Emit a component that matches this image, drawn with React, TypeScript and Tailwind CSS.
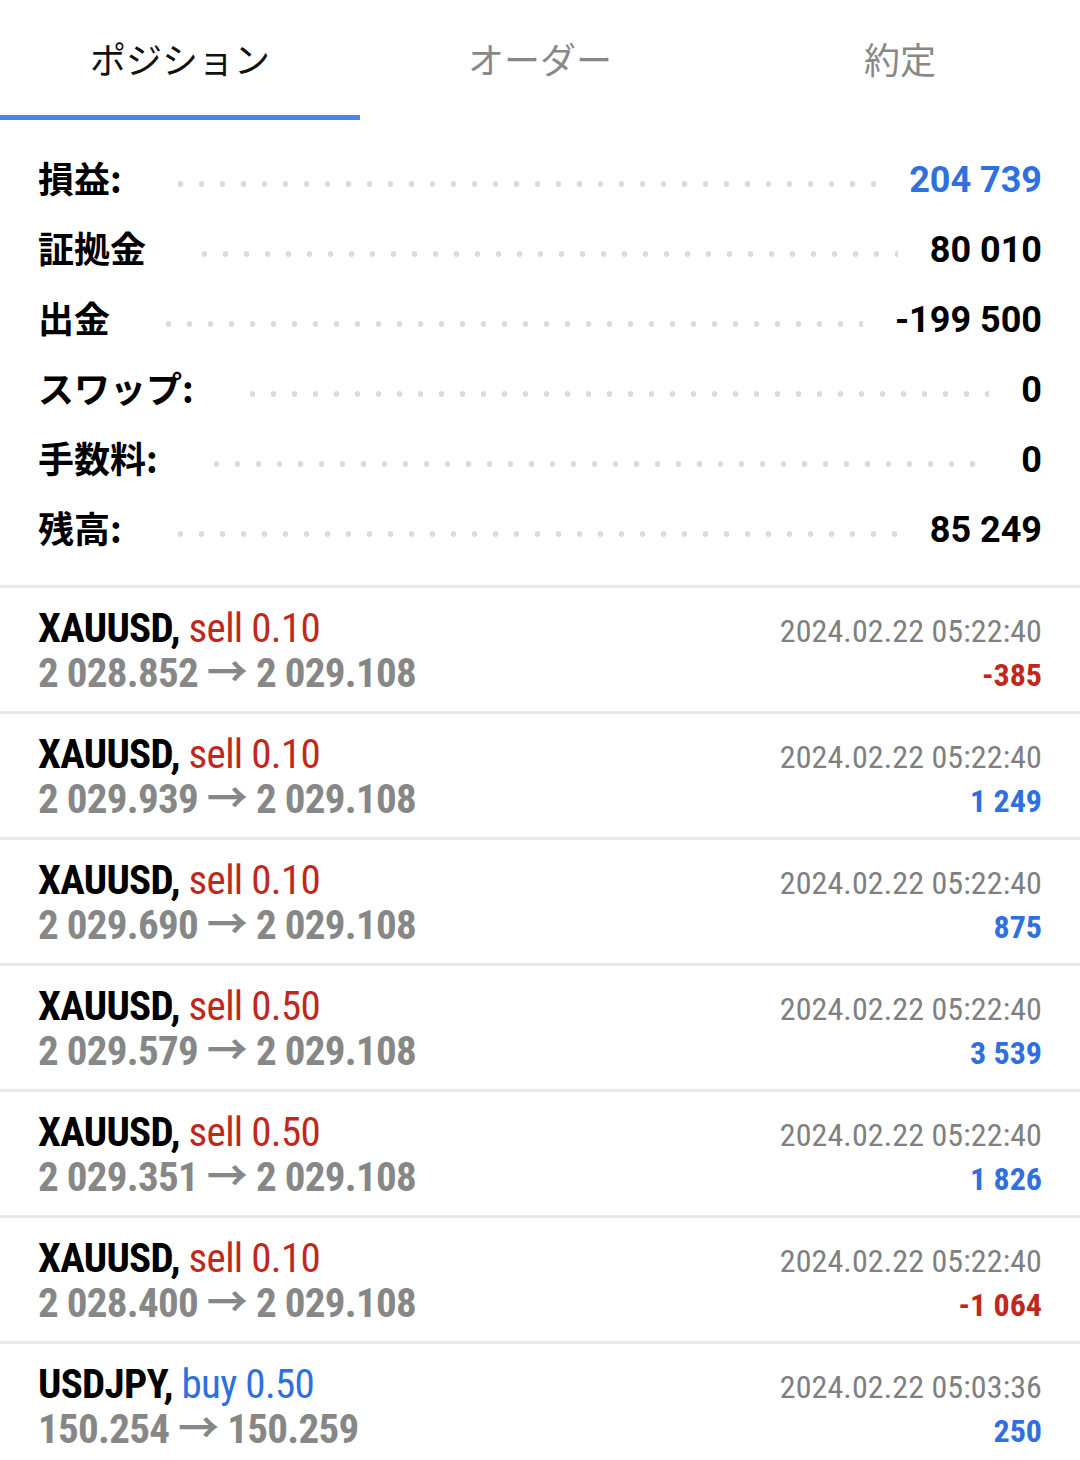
const tabs = ["ポジション", "オーダー", "約定"];

const summary = [
  { label: "損益:", value: "204 739", blue: true },
  { label: "証拠金", value: "80 010" },
  { label: "出金", value: "-199 500" },
  { label: "スワップ:", value: "0" },
  { label: "手数料:", value: "0" },
  { label: "残高:", value: "85 249" },
];

const positions = [
  { symbol: "XAUUSD", side: "sell", volume: "0.10", open: "2 028.852", close: "2 029.108", time: "2024.02.22 05:22:40", profit: "-385" },
  { symbol: "XAUUSD", side: "sell", volume: "0.10", open: "2 029.939", close: "2 029.108", time: "2024.02.22 05:22:40", profit: "1 249" },
  { symbol: "XAUUSD", side: "sell", volume: "0.10", open: "2 029.690", close: "2 029.108", time: "2024.02.22 05:22:40", profit: "875" },
  { symbol: "XAUUSD", side: "sell", volume: "0.50", open: "2 029.579", close: "2 029.108", time: "2024.02.22 05:22:40", profit: "3 539" },
  { symbol: "XAUUSD", side: "sell", volume: "0.50", open: "2 029.351", close: "2 029.108", time: "2024.02.22 05:22:40", profit: "1 826" },
  { symbol: "XAUUSD", side: "sell", volume: "0.10", open: "2 028.400", close: "2 029.108", time: "2024.02.22 05:22:40", profit: "-1 064" },
  { symbol: "USDJPY", side: "buy", volume: "0.50", open: "150.254", close: "150.259", time: "2024.02.22 05:03:36", profit: "250" },
];

export default function App() {
  return (
    <div className="w-[1080px] h-[1460px] overflow-hidden bg-white font-['Roboto','Noto_Sans_CJK_JP',sans-serif]">
      {/* Tabs */}
      <div className="flex h-[120px]">
        {tabs.map((tab, i) => (
          <div key={tab} className="flex-1 flex flex-col">
            <div
              className={
                "flex-1 flex items-center justify-center text-[36px] font-['Noto_Sans_CJK_JP',sans-serif] " +
                (i === 0 ? "text-[#111]" : "text-[#888]")
              }
            >
              {tab}
            </div>
            <div className={i === 0 ? "h-[5px] bg-[#4a86e8]" : "h-[5px]"} />
          </div>
        ))}
      </div>

      {/* Summary */}
      <div className="pt-[22px] pb-[23px] px-[38px]">
        {summary.map((row) => (
          <div key={row.label} className="flex items-center h-[70px]">
            <span className="text-[36px] font-bold text-black font-['Noto_Sans_CJK_JP',sans-serif] leading-none">
              {row.label}
            </span>
            <div className="flex-1 h-[6px] mt-[14px] ml-[48px] mr-[32px] bg-[radial-gradient(circle,#dcdcdc_2.6px,transparent_3.1px)] bg-[length:21px_6px] bg-repeat-x" />
            <span
              className={
                "text-[36px] font-bold leading-none mt-[5px] " +
                (row.blue ? "text-[#2f6fde]" : "text-black")
              }
            >
              {row.value}
            </span>
          </div>
        ))}
      </div>

      {/* Positions */}
      <div className="font-stretch-condensed">
        {positions.map((p, i) => (
          <div key={i} className="border-t-[3px] border-[#e9e9e9] h-[126px] px-[38px] pt-[18px] flex justify-between">
            <div className="flex flex-col">
              <div className="text-[41px] leading-[45px] tracking-[-0.7px]">
                <span className="font-bold text-black">{p.symbol},</span>{" "}
                <span className={p.side === "sell" ? "text-[#c0281e]" : "text-[#2f6fde]"}>
                  {p.side} {p.volume}
                </span>
              </div>
              <div className="text-[41px] leading-[45px] font-bold text-[#878787] tracking-[-0.7px]">
                {p.open} → {p.close}
              </div>
            </div>
            <div className="flex flex-col items-end pt-[3px]">
              <div className="text-[32px] leading-[44px] tracking-[0.1px] text-[#808080]">{p.time}</div>
              <div
                className={
                  "text-[32px] leading-[44px] font-bold " +
                  (p.profit.startsWith("-") ? "text-[#c0281e]" : "text-[#2f6fde]")
                }
              >
                {p.profit}
              </div>
            </div>
          </div>
        ))}
      </div>
    </div>
  );
}
